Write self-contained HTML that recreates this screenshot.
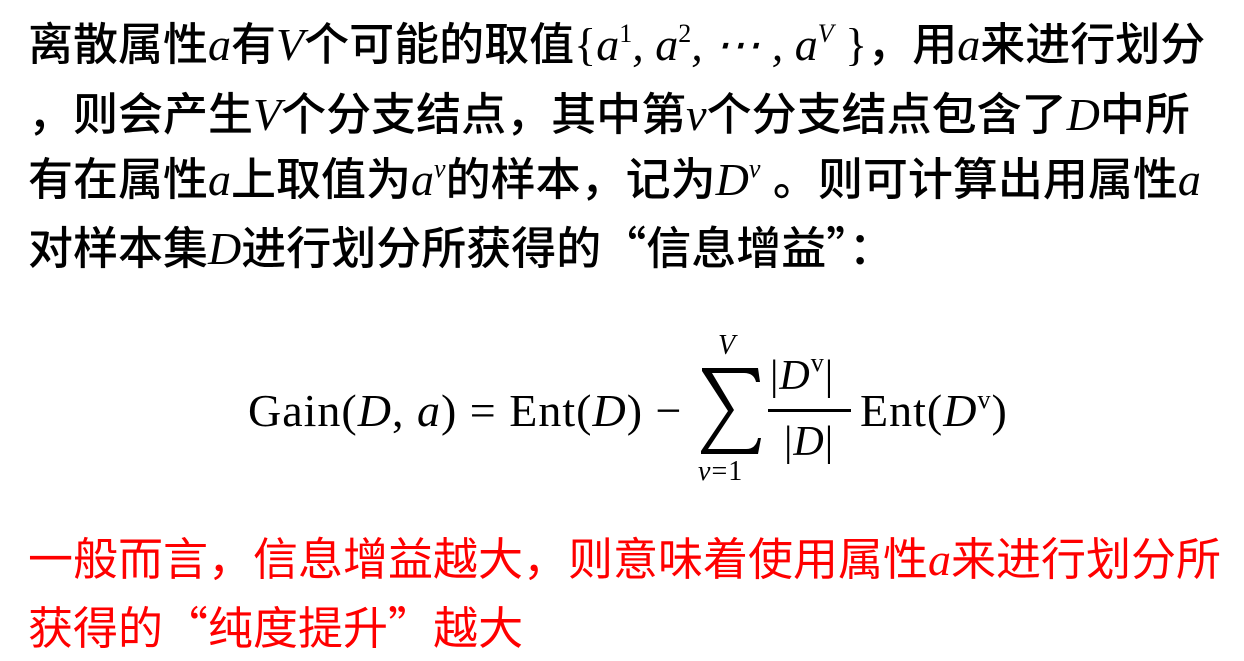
<!DOCTYPE html>
<html><head><meta charset="utf-8"><style>
html,body{margin:0;padding:0;background:#fff;width:1244px;height:661px;overflow:hidden}
body{font-family:"Liberation Sans","Noto Sans CJK SC",sans-serif;color:#000;position:relative}
.l{position:absolute;left:28px;font-size:45px;line-height:50px;white-space:nowrap;font-weight:500}
.m{font-family:"Liberation Serif","DejaVu Serif",serif;font-style:italic;font-weight:normal;font-size:46px}
sup{font-size:26px;line-height:0;vertical-align:18px}
.q{font-family:"Noto Sans CJK SC",sans-serif}
.r{color:#f00;font-weight:normal}
.f{position:absolute;font-family:"Liberation Serif","DejaVu Serif",serif;font-size:46px;white-space:nowrap;letter-spacing:1px}
.i{font-style:italic}
</style></head><body>
<div class="l" style="top:20px">离散属性<span class="m">a</span>有<span class="m">V</span>个可能的取值<span class="m" style="font-style:normal">{</span><span class="m">a</span><sup class="m" style="font-style:normal;font-size:26px">1</sup><span class="m">, a</span><sup class="m" style="font-style:normal;font-size:26px">2</sup><span class="m">, ⋯ , a</span><sup class="m" style="font-size:26px">V</sup><span class="m" style="font-style:normal">&nbsp;}</span>，用<span class="m">a</span>来进行划分</div>
<div class="l" style="top:90px">，则会产生<span class="m">V</span>个分支结点，其中第<span class="m">v</span>个分支结点包含了<span class="m">D</span>中所</div>
<div class="l" style="top:155px">有在属性<span class="m">a</span>上取值为<span class="m">a</span><sup class="m" style="font-size:26px">v</sup>的样本，记为<span class="m">D</span><sup class="m" style="font-size:26px">v</sup> 。则可计算出用属性<span class="m">a</span></div>
<div class="l" style="top:220px">对样本集<span class="m">D</span>进行划分所获得的<span class="q">“</span>信息增益<span class="q">”</span>：</div>

<div class="f" style="left:248px;top:384px">Gain(<span class="i">D</span>, <span class="i">a</span>) = Ent(<span class="i">D</span>) −</div>
<svg style="position:absolute;left:700px;top:366px" width="62" height="90" viewBox="0 0 62 90"><path d="M2 2 H58 L60 16 H56 Q54 7 44 7 H12 L34 44 L8 83 H46 Q56 83 58 72 H61 L58 88 H1 V85 L28 45 L2 5 Z" fill="#000"/></svg>
<div class="f i" style="left:718px;top:330px;font-size:28px">V</div>
<div class="f" style="left:698px;top:456px;font-size:28px"><span class="i">v</span>=1</div>
<div class="f" style="left:770px;top:352px;font-size:42px">|<span class="i">D</span><sup>v</sup>|</div>
<div style="position:absolute;left:768px;top:409px;width:83px;height:3px;background:#000"></div>
<div class="f" style="left:784px;top:418px;font-size:42px">|<span class="i">D</span>|</div>
<div class="f" style="left:860px;top:384px">Ent(<span class="i">D</span><sup>v</sup>)</div>

<div class="l r" style="top:535px">一般而言，信息增益越大，则意味着使用属性<span class="m">a</span>来进行划分所</div>
<div class="l r" style="top:600px">获得的<span class="q">“</span>纯度提升<span class="q">”</span>越大</div>
</body></html>
